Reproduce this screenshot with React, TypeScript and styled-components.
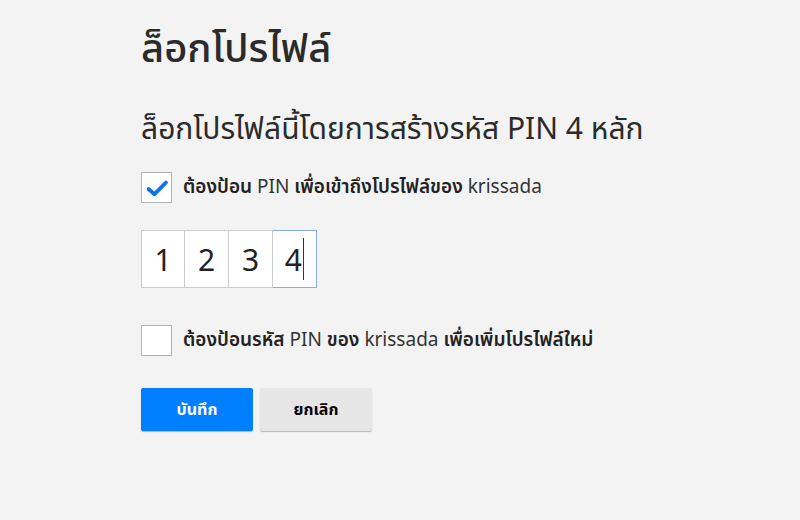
import React from "react";
import styled, { createGlobalStyle } from "styled-components";

const Global = createGlobalStyle`
  html, body { margin: 0; padding: 0; background: #f3f3f3; }
  body { font-family: "Noto Sans Thai", "Noto Sans", "Liberation Sans", sans-serif; color: #333; }
`;

const Page = styled.div`
  width: 800px;
  height: 520px;
  box-sizing: border-box;
  padding: 22px 0 0 141px;
  display: flex;
  flex-direction: column;
`;

const Title = styled.h1`
  margin: 0;
  font-size: 40px;
  font-weight: 500;
  line-height: 56px;
  color: #2b2b2b;
`;

const Subtitle = styled.h2`
  margin: 32px 0 0;
  font-size: 30px;
  font-weight: 400;
  line-height: 40px;
  color: #2b2b2b;
`;

const Row = styled.label<{ $mt: number }>`
  display: flex;
  align-items: center;
  gap: 11px;
  margin-top: ${(p) => p.$mt}px;
  font-size: 19px;
  line-height: 31px;
  color: #333;
`;

const Box = styled.span`
  width: 31px;
  height: 31px;
  box-sizing: border-box;
  border: 1px solid #b3b3b3;
  background: #fff;
  display: flex;
  align-items: center;
  justify-content: center;
`;

const Bold = styled.span`
  font-weight: 600;
  color: #222;
`;

const Pins = styled.div`
  display: flex;
  margin-top: 27px;
`;

const Pin = styled.div<{ $active?: boolean }>`
  width: 44px;
  height: 58px;
  box-sizing: border-box;
  background: #fff;
  border: 1px solid ${(p) => (p.$active ? "#86abee" : "#ccc")};
  display: flex;
  align-items: center;
  justify-content: center;
  font-size: 30px;
  font-family: "Noto Sans", sans-serif;
  color: #222;
  & + & { border-left: none; }
`;

const Caret = styled.span`
  display: inline-block;
  width: 1.5px;
  height: 42px;
  background: #333;
  margin-left: 1px;
`;

const Buttons = styled.div`
  display: flex;
  gap: 7px;
  margin-top: 32px;
`;

const Button = styled.button<{ $primary?: boolean }>`
  width: 112px;
  height: 43px;
  border: none;
  border-radius: 2px;
  font-family: inherit;
  font-size: 16px;
  font-weight: 700;
  background: ${(p) => (p.$primary ? "#0080ff" : "#e6e6e6")};
  color: ${(p) => (p.$primary ? "#fff" : "#000")};
  box-shadow: 0 1px 1px rgba(0,0,0,0.25);
`;

const Check = () => (
  <svg width="24" height="24" viewBox="0 0 24 24">
    <path d="M3.5 13l6 5.2L21 6.5" fill="none" stroke="#0a74ea" strokeWidth="3.8" strokeLinecap="round" strokeLinejoin="round" />
  </svg>
);

export default function App() {
  return (
    <Page>
      <Global />
      <Title>ล็อกโปรไฟล์</Title>
      <Subtitle>ล็อกโปรไฟล์นี้โดยการสร้างรหัส PIN 4 หลัก</Subtitle>
      <Row $mt={22}>
        <Box><Check /></Box>
        <span>
          <Bold>ต้องป้อน</Bold> PIN <Bold>เพื่อเข้าถึงโปรไฟล์ของ</Bold> krissada
        </span>
      </Row>
      <Pins>
        <Pin>1</Pin>
        <Pin>2</Pin>
        <Pin>3</Pin>
        <Pin $active>4<Caret /></Pin>
      </Pins>
      <Row $mt={37}>
        <Box />
        <span>
          <Bold>ต้องป้อนรหัส</Bold> PIN <Bold>ของ</Bold> krissada <Bold>เพื่อเพิ่มโปรไฟล์ใหม่</Bold>
        </span>
      </Row>
      <Buttons>
        <Button $primary>บันทึก</Button>
        <Button>ยกเลิก</Button>
      </Buttons>
    </Page>
  );
}
